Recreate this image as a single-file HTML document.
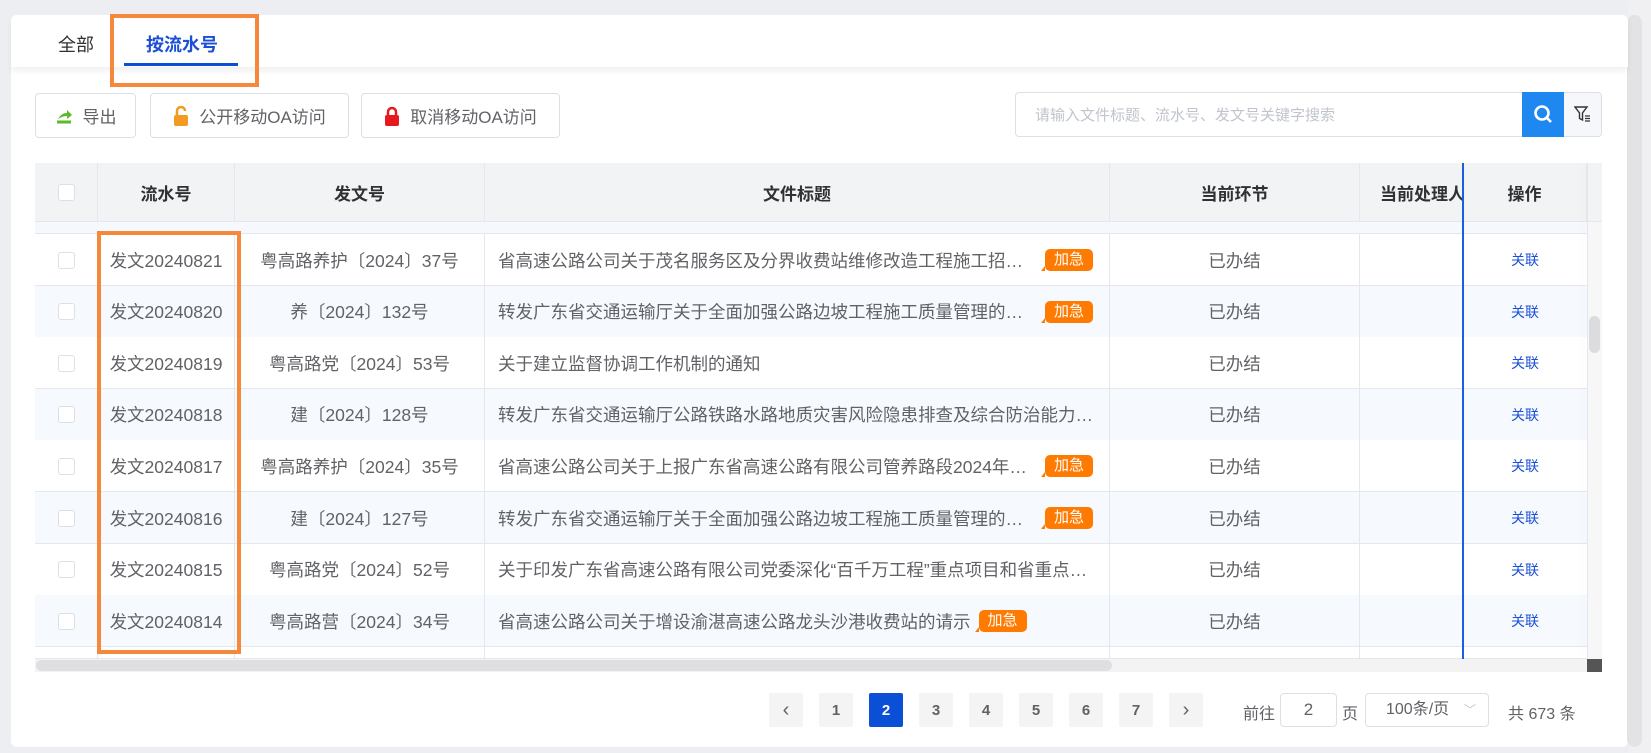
<!DOCTYPE html>
<html><head><meta charset="utf-8"><style>
*{box-sizing:border-box;margin:0;padding:0}
body{width:1651px;height:753px;background:#eceef2;font-family:"Liberation Sans","Noto Sans CJK SC",sans-serif;color:#606266;position:relative;overflow:hidden}
.abs{position:absolute}
.card{left:11px;top:15px;width:1617px;height:732px;background:#fff;border-radius:6px}
.tabs{left:11px;top:15px;width:1617px;height:52px;box-shadow:0 4px 6px rgba(0,0,0,.06);border-radius:6px 6px 0 0;background:#fff}
.btn{top:93px;height:45px;border:1px solid #dcdfe6;border-radius:4px;background:#fff;font-size:17px;display:flex;align-items:center;justify-content:center;gap:10px;color:#606266}
.th{top:163px;height:59px;background:#f2f3f5;font-weight:bold;color:#303133;font-size:17px;display:flex;align-items:center;justify-content:center;border-right:1px solid #e4e7ed;border-bottom:1px solid #e4e7ed}
.row{left:35px;width:1552px;height:52px;border-bottom:1px solid #e4e7ed}
.cell{height:52px;display:flex;align-items:center;justify-content:center;font-size:17.5px;border-right:1px solid #e4e7ed;white-space:nowrap;overflow:hidden}
.cb{width:17px;height:17px;border:1px solid #dcdfe6;border-radius:3px;background:#fff}
.badge{display:inline-block;background:#ff7a00;color:#fff;font-size:15px;border-radius:5px;padding:0 9px;height:22px;line-height:22px;position:relative;margin-left:8px}
.badge:before{content:"";position:absolute;left:-4px;bottom:0;border-left:4px solid transparent;border-bottom:5px solid #ff7a00}
.pg{top:693px;width:34px;height:34px;background:#f4f4f5;border-radius:2px;font-size:15px;font-weight:bold;color:#606266;display:flex;align-items:center;justify-content:center}
</style></head><body>
<div class="abs card"></div>
<div class="abs" style="left:1628px;top:0;width:23px;height:753px;background:#f0f0f2"></div>
<div class="abs" style="left:1627px;top:15px;width:15px;height:732px;background:#e3e3e5;border-radius:8px"></div>
<div class="abs tabs"></div>
<div class="abs" style="left:58px;top:31px;font-size:18px;color:#303133">全部</div>
<div class="abs" style="left:146px;top:31px;font-size:18px;font-weight:bold;color:#1a4fd6">按流水号</div>
<div class="abs" style="left:124px;top:63px;width:114px;height:3px;background:#0b4fd6"></div>
<div class="abs" style="left:110px;top:14px;width:149px;height:73px;border:4px solid #f5883a"></div>

<div class="abs btn" style="left:35px;width:101px"><svg width="18" height="16"><path d="M2 14h14" stroke="#5cb82c" stroke-width="3"/><path d="M3 11c3-5 6-6 9-6V2l5 5-5 4V8c-3 0-6 1-9 3z" fill="#5cb82c"/></svg>导出</div>
<div class="abs btn" style="left:150px;width:199px"><svg width="16" height="20"><path d="M4 9V5a4 4 0 0 1 8 0" stroke="#f39a24" stroke-width="2.5" fill="none"/><rect x="1" y="9" width="14" height="11" rx="2" fill="#f39a24"/></svg>公开移动OA访问</div>
<div class="abs btn" style="left:361px;width:199px"><svg width="16" height="20"><path d="M4 9V6a4 4 0 0 1 8 0v3" stroke="#e8191e" stroke-width="2.5" fill="none"/><rect x="1" y="9" width="14" height="11" rx="2" fill="#e8191e"/></svg>取消移动OA访问</div>

<div class="abs" style="left:1015px;top:92px;width:587px;height:45px;border:1px solid #dcdfe6;border-radius:4px;background:#fff"></div>
<div class="abs" style="left:1035px;top:104px;font-size:15px;color:#c0c4cc">请输入文件标题、流水号、发文号关键字搜索</div>
<div class="abs" style="left:1522px;top:92px;width:42px;height:45px;background:#1e88f0"></div>
<svg class="abs" style="left:1532px;top:103px" width="22" height="22"><circle cx="10" cy="10" r="6.5" stroke="#fff" stroke-width="2.6" fill="none"/><path d="M15 15l4 4" stroke="#fff" stroke-width="2.6"/></svg>
<div class="abs" style="left:1564px;top:93px;width:37px;height:43px;background:#f5f7fa;border-radius:0 4px 4px 0"></div>
<svg class="abs" style="left:1574px;top:105px" width="18" height="18"><path d="M1 2h12l-4.5 6v7l-3-1.5V8z" stroke="#333" stroke-width="1.4" fill="none"/><path d="M11 11h5M11 13.5h5M11 16h5" stroke="#333" stroke-width="1.2"/></svg>

<!-- table -->
<div class="abs" style="left:35px;top:163px;width:1567px;height:509px;border:1px solid #e4e7ed;background:#fff"></div>
<div class="abs th" style="left:35px;width:63px"><div class="cb"></div></div>
<div class="abs th" style="left:98px;width:137px">流水号</div>
<div class="abs th" style="left:235px;width:250px">发文号</div>
<div class="abs th" style="left:485px;width:625px">文件标题</div>
<div class="abs th" style="left:1110px;width:250px">当前环节</div>
<div class="abs th" style="left:1360px;width:103px;justify-content:flex-start;padding-left:20px;overflow:hidden;white-space:nowrap">当前处理人</div>
<div class="abs th" style="left:1463px;width:124px">操作</div>
<div class="abs" style="left:1587px;top:163px;width:15px;height:59px;background:#f2f3f5;border-bottom:1px solid #e4e7ed"></div>
<div class="abs" style="left:35px;top:222px;width:1552px;height:12px;background:#f5f9fd;border-bottom:1px solid #e4e7ed"></div>

<div id="rows"></div>
<script>
var d=[["发文20240821","粤高路养护〔2024〕37号","省高速公路公司关于茂名服务区及分界收费站维修改造工程施工招…",1],
["发文20240820","养〔2024〕132号","转发广东省交通运输厅关于全面加强公路边坡工程施工质量管理的…",1],
["发文20240819","粤高路党〔2024〕53号","关于建立监督协调工作机制的通知",0],
["发文20240818","建〔2024〕128号","转发广东省交通运输厅公路铁路水路地质灾害风险隐患排查及综合防治能力…",0],
["发文20240817","粤高路养护〔2024〕35号","省高速公路公司关于上报广东省高速公路有限公司管养路段2024年…",1],
["发文20240816","建〔2024〕127号","转发广东省交通运输厅关于全面加强公路边坡工程施工质量管理的…",1],
["发文20240815","粤高路党〔2024〕52号","关于印发广东省高速公路有限公司党委深化“百千万工程”重点项目和省重点…",0],
["发文20240814","粤高路营〔2024〕34号","省高速公路公司关于增设渝湛高速公路龙头沙港收费站的请示",2]];
var h="";
for(var i=0;i<9;i++){var t=234+i*51.6;var bg=i%2?"#f6f9fd":"#fff";var r=d[i]||["","","",0];var hh=i==8?(659-t):52;
h+='<div class="abs row" style="top:'+t+'px;height:'+hh+'px;background:'+bg+'">'+
'<div class="abs cell" style="left:0;width:63px;height:'+hh+'px">'+(i<8?'<div class="cb"></div>':'')+'</div>'+
'<div class="abs cell" style="left:63px;width:137px;height:'+hh+'px">'+r[0]+'</div>'+
'<div class="abs cell" style="left:200px;width:250px;height:'+hh+'px">'+r[1]+'</div>'+
'<div class="abs cell" style="left:450px;width:625px;height:'+hh+'px;justify-content:flex-start;padding-left:13px">'+(r[3]==1?'<span style="width:541px;display:inline-block;overflow:hidden">'+r[2]+'</span><span class="badge" style="margin-left:6px">加急</span>':r[2]+(r[3]==2?'<span class="badge">加急</span>':''))+'</div>'+
'<div class="abs cell" style="left:1075px;width:250px;height:'+hh+'px">'+(i<8?'已办结':'')+'</div>'+
'<div class="abs cell" style="left:1325px;width:103px;height:'+hh+'px;border-right:none"></div>'+
'<div class="abs cell" style="left:1428px;width:124px;height:'+hh+'px;color:#1a4fd6;font-size:14px;border-right:none">'+(i<8?'关联':'')+'</div></div>';}
document.getElementById("rows").innerHTML=h;
</script>
<div class="abs" style="left:1462px;top:163px;width:2px;height:496px;background:#1a5fe0"></div>
<div class="abs" style="left:1587px;top:163px;width:1px;height:496px;background:#e4e7ed;box-shadow:-4px 0 8px rgba(0,0,0,.08)"></div>
<div class="abs" style="left:1588px;top:222px;width:14px;height:437px;background:#f7f7f8"></div>
<div class="abs" style="left:1589px;top:316px;width:11px;height:37px;background:#dcdcde;border-radius:6px"></div>
<div class="abs" style="left:35px;top:659px;width:1552px;height:13px;background:#f3f3f4"></div>
<div class="abs" style="left:36px;top:660px;width:1076px;height:11px;background:#dfdfe1;border-radius:6px"></div>
<div class="abs" style="left:1587px;top:659px;width:15px;height:13px;background:#555"></div>
<div class="abs" style="left:97px;top:231px;width:144px;height:423px;border:4px solid #f5883a"></div>

<!-- pagination -->
<div class="abs pg" style="left:769px;font-size:20px;font-weight:normal">‹</div>
<div class="abs pg" style="left:819px">1</div>
<div class="abs pg" style="left:869px;background:#0b4fd6;color:#fff">2</div>
<div class="abs pg" style="left:919px">3</div>
<div class="abs pg" style="left:969px">4</div>
<div class="abs pg" style="left:1019px">5</div>
<div class="abs pg" style="left:1069px">6</div>
<div class="abs pg" style="left:1119px">7</div>
<div class="abs pg" style="left:1169px;font-size:20px;font-weight:normal">›</div>
<div class="abs" style="left:1243px;top:700px;font-size:16px">前往</div>
<div class="abs" style="left:1280px;top:693px;width:57px;height:34px;border:1px solid #dcdfe6;border-radius:4px;text-align:center;line-height:32px;font-size:17px">2</div>
<div class="abs" style="left:1342px;top:700px;font-size:16px">页</div>
<div class="abs" style="left:1365px;top:693px;width:124px;height:34px;border:1px solid #dcdfe6;border-radius:4px;line-height:32px;font-size:16px;padding-left:20px">100条/页<span style="position:absolute;right:12px;color:#c0c4cc;font-size:12px">﹀</span></div>
<div class="abs" style="left:1508px;top:700px;font-size:16px">共 673 条</div>
</body></html>
